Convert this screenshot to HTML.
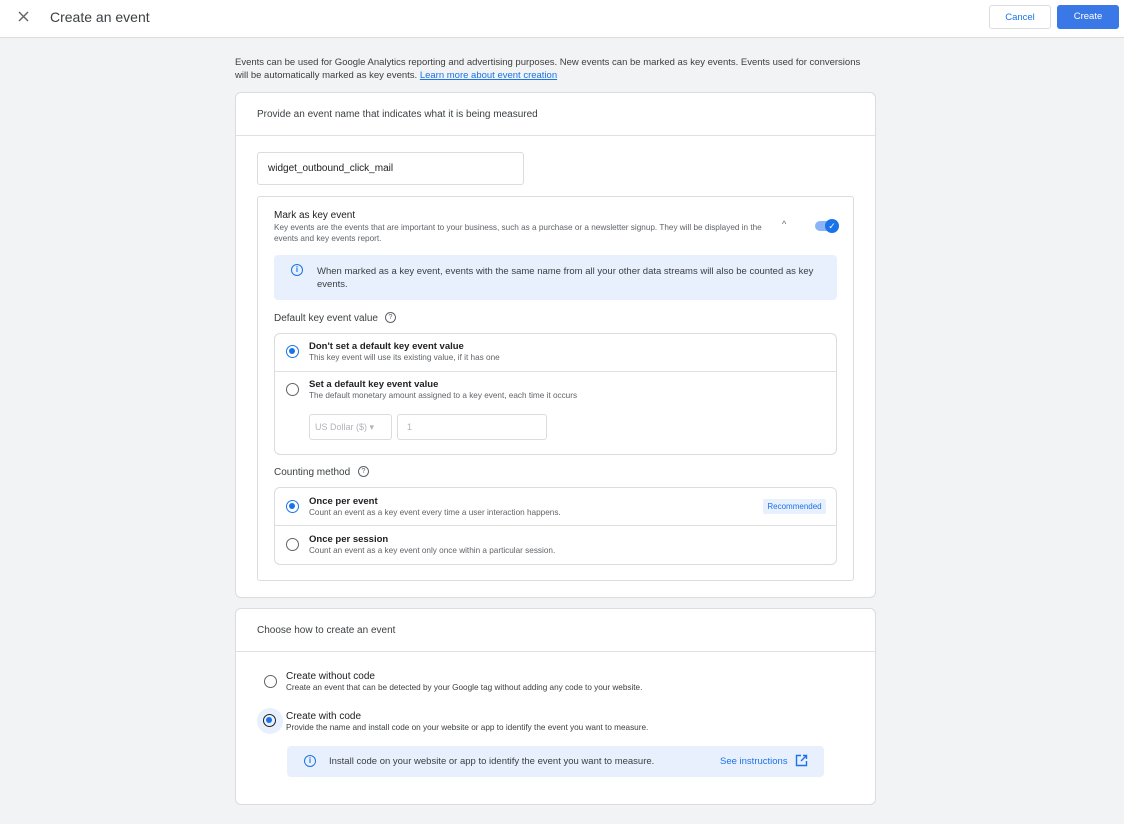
<!DOCTYPE html>
<html><head><meta charset="utf-8"><style>
*{box-sizing:border-box;margin:0;padding:0}
body{width:1124px;height:824px;background:#f1f3f4;font-family:"Liberation Sans",sans-serif;color:#202124;position:relative;overflow:hidden}
.a{position:absolute}
.t{font-size:10px;color:#3c4043;white-space:nowrap}
.s{font-size:8.2px;color:#5f6368;white-space:nowrap}
.card{position:absolute;background:#fff;border:1px solid #dadce0;border-radius:6px}
.box{position:absolute;border:1px solid #dadce0;border-radius:6px;background:#fff}
.radio{position:absolute;width:13px;height:13px;border:1.5px solid #5f6368;border-radius:50%}
.radio.on{border-color:#1a73e8}
.radio.on::after{content:"";position:absolute;left:2px;top:2px;width:6px;height:6px;border-radius:50%;background:#1a73e8}
.hr{position:absolute;height:1px;background:#e0e0e0}
</style></head><body>
<div class="a" style="left:0;top:0;width:1124px;height:38px;background:#fff;border-bottom:1px solid #dadce0"></div>
<svg class="a" style="left:18px;top:11px" width="11" height="11" viewBox="0 0 11 11" stroke="#5f6368" stroke-width="1.4"><path d="M1 1L10 10M10 1L1 10"/></svg>
<div class="a" style="left:50px;top:9px;font-size:14px;color:#3c4043">Create an event</div>
<div class="a" style="left:989px;top:5px;width:62px;height:24px;border:1px solid #dadce0;border-radius:3px;background:#fff;color:#1a73e8;font-size:9.5px;text-align:center;line-height:22px;padding-top:1px">Cancel</div>
<div class="a" style="left:1057px;top:5px;width:62px;height:24px;border-radius:3px;background:#3b78e7;color:#fff;font-size:9.5px;text-align:center;line-height:24px">Create</div>

<div class="a t" style="left:235px;top:56px;line-height:13px;font-size:9.5px">Events can be used for Google Analytics reporting and advertising purposes. New events can be marked as key events. Events used for conversions<br>will be automatically marked as key events. <span style="color:#1a73e8;text-decoration:underline">Learn more about event creation</span></div>

<div class="card" style="left:235px;top:92px;width:641px;height:506px"></div>
<div class="a t" style="left:257px;top:109px">Provide an event name that indicates what it is being measured</div>
<div class="hr" style="left:236px;top:135px;width:639px"></div>
<div class="a" style="left:257px;top:152px;width:267px;height:33px;border:1px solid #dadce0;border-radius:3px;background:#fff"></div>
<div class="a t" style="left:268px;top:163px;color:#202124">widget_outbound_click_mail</div>

<div class="box" style="left:257px;top:196px;width:597px;height:385px;border-radius:3px"></div>
<div class="a t" style="left:274px;top:210px;color:#202124">Mark as key event</div>
<div class="a s" style="left:274px;top:222px;line-height:11px">Key events are the events that are important to your business, such as a purchase or a newsletter signup. They will be displayed in the<br>events and key events report.</div>
<div class="a" style="left:782px;top:219px;font-size:9px;color:#5f6368">^</div>
<div class="a" style="left:815px;top:221px;width:22px;height:10px;border-radius:5px;background:#8ab4f8"></div>
<div class="a" style="left:825px;top:219px;width:14px;height:14px;border-radius:50%;background:#1a73e8;color:#fff;font-size:9px;text-align:center;line-height:14px">✓</div>

<div class="a" style="left:274px;top:255px;width:563px;height:45px;background:#e8f0fe;border-radius:4px"></div>
<div class="a" style="left:291px;top:264px;width:12px;height:12px;border:1.3px solid #1a73e8;border-radius:50%;color:#1a73e8;font-size:8px;text-align:center;line-height:10px;font-weight:bold">i</div>
<div class="a t" style="left:317px;top:265px;line-height:13px;font-size:9.5px;color:#3c4043">When marked as a key event, events with the same name from all your other data streams will also be counted as key<br>events.</div>

<div class="a t" style="left:274px;top:313px">Default key event value</div>
<div class="a" style="left:385px;top:312px;width:11px;height:11px;border:1.2px solid #5f6368;border-radius:50%;font-size:7px;text-align:center;line-height:9px;color:#5f6368">?</div>
<div class="box" style="left:274px;top:333px;width:563px;height:122px"></div>
<div class="hr" style="left:275px;top:371px;width:561px"></div>
<div class="radio on" style="left:286px;top:345px"></div>
<div class="a t" style="left:309px;top:341px;color:#202124;font-weight:bold;font-size:9.5px">Don't set a default key event value</div>
<div class="a s" style="left:309px;top:353px">This key event will use its existing value, if it has one</div>
<div class="radio" style="left:286px;top:383px"></div>
<div class="a t" style="left:309px;top:379px;color:#202124;font-weight:bold;font-size:9.5px">Set a default key event value</div>
<div class="a s" style="left:309px;top:391px">The default monetary amount assigned to a key event, each time it occurs</div>
<div class="a" style="left:309px;top:414px;width:83px;height:26px;border:1px solid #dadce0;border-radius:3px"></div>
<div class="a s" style="left:315px;top:422px;color:#b0b3b8;font-size:9px">US Dollar ($) ▾</div>
<div class="a" style="left:397px;top:414px;width:150px;height:26px;border:1px solid #dadce0;border-radius:3px"></div>
<div class="a s" style="left:407px;top:422px;color:#b0b3b8;font-size:9px">1</div>

<div class="a t" style="left:274px;top:467px">Counting method</div>
<div class="a" style="left:358px;top:466px;width:11px;height:11px;border:1.2px solid #5f6368;border-radius:50%;font-size:7px;text-align:center;line-height:9px;color:#5f6368">?</div>
<div class="box" style="left:274px;top:487px;width:563px;height:78px"></div>
<div class="hr" style="left:275px;top:525px;width:561px"></div>
<div class="radio on" style="left:286px;top:500px"></div>
<div class="a t" style="left:309px;top:496px;color:#202124;font-weight:bold;font-size:9.5px">Once per event</div>
<div class="a s" style="left:309px;top:508px">Count an event as a key event every time a user interaction happens.</div>
<div class="a" style="left:763px;top:499px;width:63px;height:15px;background:#e8f0fe;border-radius:2px;color:#1a73e8;font-size:8px;text-align:center;line-height:15px">Recommended</div>
<div class="radio" style="left:286px;top:538px"></div>
<div class="a t" style="left:309px;top:534px;color:#202124;font-weight:bold;font-size:9.5px">Once per session</div>
<div class="a s" style="left:309px;top:546px">Count an event as a key event only once within a particular session.</div>

<div class="card" style="left:235px;top:608px;width:641px;height:197px"></div>
<div class="a t" style="left:257px;top:625px">Choose how to create an event</div>
<div class="hr" style="left:236px;top:651px;width:639px"></div>
<div class="radio" style="left:264px;top:675px"></div>
<div class="a t" style="left:286px;top:671px;color:#202124">Create without code</div>
<div class="a s" style="left:286px;top:683px;color:#3c4043">Create an event that can be detected by your Google tag without adding any code to your website.</div>
<div class="a" style="left:257px;top:708px;width:26px;height:26px;border-radius:50%;background:#e8f0fe"></div>
<div class="radio on" style="left:263px;top:714px;border-color:#202124"></div>
<div class="a t" style="left:286px;top:711px;color:#202124">Create with code</div>
<div class="a s" style="left:286px;top:723px;color:#3c4043">Provide the name and install code on your website or app to identify the event you want to measure.</div>
<div class="a" style="left:287px;top:746px;width:537px;height:31px;background:#e8f0fe;border-radius:4px"></div>
<div class="a" style="left:304px;top:755px;width:12px;height:12px;border:1.3px solid #1a73e8;border-radius:50%;color:#1a73e8;font-size:8px;text-align:center;line-height:10px;font-weight:bold">i</div>
<div class="a t" style="left:329px;top:756px;font-size:9.5px">Install code on your website or app to identify the event you want to measure.</div>
<div class="a t" style="left:720px;top:756px;color:#1a73e8;font-size:9.5px">See instructions</div>
<svg class="a" style="left:795px;top:754px" width="13" height="13" viewBox="0 0 13 13" fill="none" stroke="#1a73e8" stroke-width="1.4"><path d="M6 1.5H1.5v10h10V7M8 1.5h3.5V5M11.5 1.5L6 7"/></svg>
</body></html>
